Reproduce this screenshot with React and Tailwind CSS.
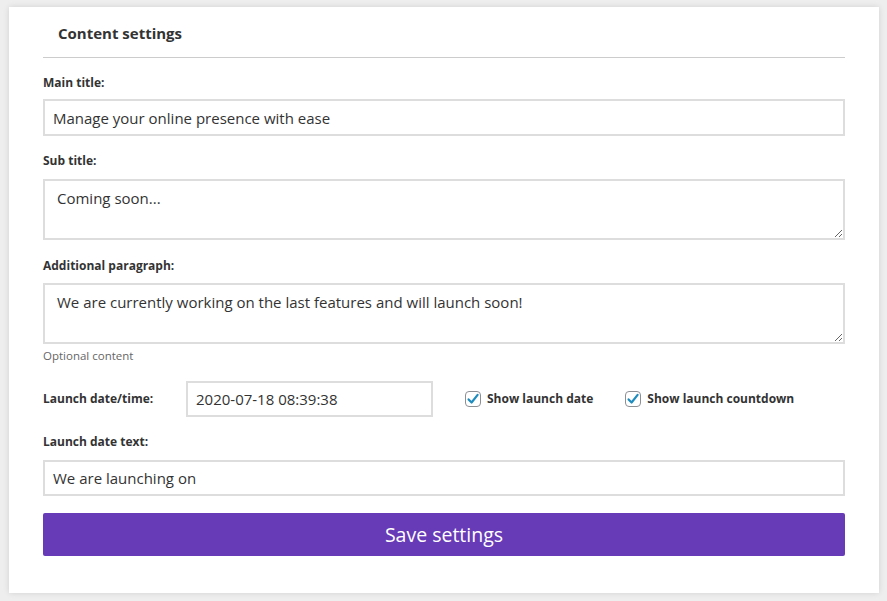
const font = { fontFamily: '"Open Sans", Lato, sans-serif' };

function Label({ children, className = '' }) {
  return (
    <label className={`block text-[12px] font-bold leading-[16px] text-[#333] ${className}`}>
      {children}
    </label>
  );
}

function CheckBox({ label }) {
  return (
    <label className="flex items-center gap-[6px] text-[12px] font-bold text-[#333]">
      <span className="relative flex h-4 w-4 items-center justify-center rounded-[4px] border border-[#8c8f94] bg-white">
        <svg viewBox="0 0 16 16" className="absolute -top-[1px] -left-[1px] h-4 w-4">
          <path d="M3.6 8.4l3 3.1 6-7.6" fill="none" stroke="#1e8cbe" strokeWidth="2.2" strokeLinecap="round" strokeLinejoin="round" />
        </svg>
      </span>
      {label}
    </label>
  );
}

export default function App() {
  const inputCls =
    'block w-full border-2 border-[#ddd] bg-white text-[15px] text-[#333] outline-none';

  return (
    <div className="h-[601px] w-full bg-[#eeeeee] pl-[9px] pt-[7px]" style={font}>
      <div className="h-[586px] w-[870px] bg-white px-[34px] shadow-[0_0_6px_rgba(0,0,0,0.12)]">
        <div className="flex h-[51px] items-center border-b border-[#ccc] pl-[15px] pt-[2px]">
          <h2 className="text-[15px] font-bold text-[#333]">Content settings</h2>
        </div>

        <Label className="mt-[17px] mb-[8px]">Main title:</Label>
        <input className={`${inputCls} h-[37px] px-[8px]`} defaultValue="Manage your online presence with ease" />

        <Label className="mt-[17px] mb-[10px]">Sub title:</Label>
        <textarea className={`${inputCls} h-[61px] px-[12px] py-[6px]`} defaultValue="Coming soon..." />

        <Label className="mt-[18px] mb-[9px]">Additional paragraph:</Label>
        <textarea
          className={`${inputCls} h-[61px] px-[12px] py-[6px]`}
          defaultValue="We are currently working on the last features and will launch soon!"
        />
        <p className="mt-[5px] text-[11.5px] leading-[14px] text-[#666]">Optional content</p>

        <div className="mt-[18px] flex h-[36px] items-center">
          <Label className="w-[143px]">Launch date/time:</Label>
          <input className={`${inputCls} h-[36px] !w-[247px] px-[8px]`} defaultValue="2020-07-18 08:39:38" />
          <div className="ml-[32px] flex items-center gap-[32px]">
            <CheckBox label="Show launch date" />
            <CheckBox label="Show launch countdown" />
          </div>
        </div>

        <Label className="mt-[17px] mb-[10px]">Launch date text:</Label>
        <input className={`${inputCls} h-[36px] px-[8px]`} defaultValue="We are launching on" />

        <button className="mt-[17px] flex h-[43px] w-full items-center justify-center rounded-[2px] bg-[#673ab7] text-[19.5px] text-white">
          Save settings
        </button>
      </div>
    </div>
  );
}
